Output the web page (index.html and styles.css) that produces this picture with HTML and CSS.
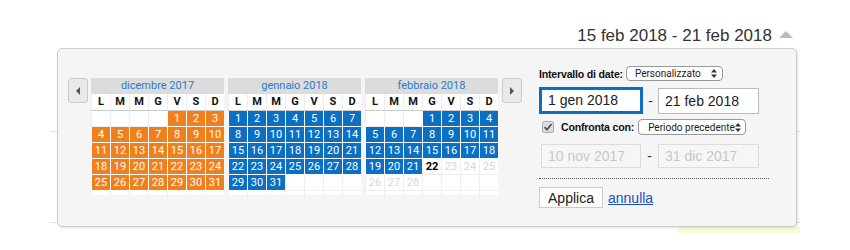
FILE: index.html
```html
<!DOCTYPE html>
<html lang="it">
<head>
  <meta charset="UTF-8" />
  <title>Intervallo di date</title>
  <link rel="stylesheet" href="styles.css">
</head>
<body>

  <div class="range-head">
    <span class="range-text">15 feb 2018 - 21 feb 2018</span>
    <span class="caret"></span>
  </div>

  <div class="page">
    <div class="page-line first"></div>
    <div class="page-line second"></div>
    <div class="page-note"></div>

    <div class="picker">
      <div class="cal">
        <div class="nav prev"><span class="tri-left"></span></div>
        <div class="month" id="m0"></div>
        <div class="month" id="m1"></div>
        <div class="month" id="m2"></div>
        <div class="nav next"><span class="tri-right"></span></div>
      </div>

      <div class="controls">
        <div class="row">
          <span class="lbl">Intervallo di date:</span>
          <div class="select sel-range"><span>Personalizzato</span>
            <svg class="arrows" width="6" height="9" viewBox="0 0 6 9"><path d="M3 0L6 3.5H0Z M3 9L6 5.5H0Z" fill="#333"/></svg>
          </div>
        </div>
        <div class="row dates">
          <div class="field focus">1 gen 2018</div>
          <span class="dash">-</span>
          <div class="field">21 feb 2018</div>
        </div>
        <div class="row compare">
          <svg class="check" width="12" height="12" viewBox="0 0 12 12"><rect x="0.5" y="0.5" width="11" height="11" rx="2" fill="#ddd" stroke="#aaa"/><path d="M2.5 6.2L5 8.6L9.6 3" fill="none" stroke="#555" stroke-width="1.8"/></svg>
          <span class="lbl">Confronta con:</span>
          <div class="select sel-compare"><span>Periodo precedente</span>
            <svg class="arrows" width="6" height="9" viewBox="0 0 6 9"><path d="M3 0L6 3.5H0Z M3 9L6 5.5H0Z" fill="#333"/></svg>
          </div>
        </div>
        <div class="row dates off">
          <div class="field disabled first">10 nov 2017</div>
          <span class="dash">-</span>
          <div class="field disabled">31 dic 2017</div>
        </div>
        <div class="dots"></div>
        <div class="row actions">
          <button class="apply">Applica</button>
          <a href="#" class="cancel">annulla</a>
        </div>
      </div>
    </div>
  </div>

  <script>
    var months = [
      { title: "dicembre 2017", lead: 4, len: 31, cls: "a", upTo: 31 },
      { title: "gennaio 2018", lead: 0, len: 31, cls: "b", upTo: 31 },
      { title: "febbraio 2018", lead: 3, len: 28, cls: "b", upTo: 21, today: 22 }
    ];
    var dow = ["L", "M", "M", "G", "V", "S", "D"];

    months.forEach(function (m, i) {
      var html = '<div class="month-title">' + m.title + '</div><div class="dow">';
      dow.forEach(function (d) { html += '<span>' + d + '</span>'; });
      html += '</div><div class="days">';
      for (var c = 0; c < 42; c++) {
        var n = c - m.lead + 1;
        if (n < 1 || n > m.len) {
          html += '<span class="day"></span>';
        } else if (n <= m.upTo) {
          html += '<span class="day sel-' + m.cls + '">' + n + '</span>';
        } else if (n === m.today) {
          html += '<span class="day today">' + n + '</span>';
        } else {
          html += '<span class="day later">' + n + '</span>';
        }
      }
      html += '</div>';
      document.getElementById("m" + i).innerHTML = html;
    });
  </script>
</body>
</html>
```

FILE: styles.css
```css
* {
  box-sizing: border-box;
}
body {
  margin: 0;
  background: #fff;
  font-family: Roboto, "Liberation Sans", Arial, sans-serif;
}

/* top label */
.range-head {
  display: flex;
  justify-content: flex-end;
  align-items: center;
  height: 48px;
  padding: 26px 57px 2px 0;
}
.range-text {
  font-family: "Liberation Sans", Arial, sans-serif;
  font-size: 17px;
  line-height: 20px;
  color: #333;
}
.caret {
  width: 0;
  height: 0;
  margin: -3px 0 0 7px;
  border-left: 7px solid transparent;
  border-right: 7px solid transparent;
  border-bottom: 7px solid #bbb;
}

/* page behind the dropdown */
.page {
  position: relative;
  margin-left: 50px;
  width: 750px;
  height: 202px;
}
.page-line {
  border-top: 1px solid #e2e2e2;
}
.page-line.first {
  padding-top: 83px;
  border-top: none;
  border-bottom: 1px solid #e2e2e2;
}
.page-line.second {
  margin-top: 90px;
}
.page-note {
  margin: 4px 0 0 627px;
  width: 123px;
  height: 6px;
  background: #fafad4;
}

/* dropdown */
.picker {
  position: absolute;
  top: 0;
  left: 7px;
  width: 740px;
  height: 179px;
  display: flex;
  align-items: flex-start;
  padding-left: 10px;
  background: #f5f5f5;
  border: 1px solid #ccc;
  border-radius: 5px;
  box-shadow: 1px 1px 2px rgba(0,0,0,0.12);
}
.cal {
  display: flex;
  align-items: flex-start;
  margin-top: 29px;
}
.nav {
  width: 20px;
  height: 25px;
  display: flex;
  align-items: center;
  justify-content: center;
  background: #e9e9e9;
  border: 1px solid #ccc;
  border-radius: 3px;
}
.nav.prev {
  margin-right: 3px;
}
.nav.next {
  margin-left: 4px;
}
.tri-left {
  border-top: 4px solid transparent;
  border-bottom: 4px solid transparent;
  border-right: 4px solid #555;
}
.tri-right {
  border-top: 4px solid transparent;
  border-bottom: 4px solid transparent;
  border-left: 4px solid #555;
}
.month {
  width: 133px;
  height: 117px;
  overflow: hidden;
  background: #fff;
}
.month + .month {
  margin-left: 4px;
}
.month-title {
  height: 16px;
  background: #dcdcdc;
  color: #2a7bcf;
  font-size: 11px;
  line-height: 16px;
  text-align: center;
}
.dow {
  display: grid;
  grid-template-columns: repeat(7, 19px);
  height: 17px;
  border-bottom: 1px solid #ccc;
}
.dow span {
  border-left: 1px solid #eee;
  font-size: 11px;
  font-weight: bold;
  line-height: 16px;
  text-align: center;
  color: #111;
}
.days {
  display: grid;
  grid-template-columns: repeat(7, 19px);
  grid-auto-rows: 16px;
}
.day {
  border-left: 1px solid #eee;
  border-bottom: 1px solid #eee;
  font-size: 11px;
  line-height: 15px;
  text-align: center;
  color: #fff;
}
.day.sel-a {
  background: #f0801c;
  border-color: #fff;
}
.day.sel-b {
  background: #0b6fc4;
  border-color: #fff;
}
.day.today {
  color: #000;
  font-weight: bold;
}
.day.later {
  color: #d6d6d6;
}

/* right side */
.controls {
  width: 232px;
  margin: 17px 0 0 17px;
  font-family: "Liberation Sans", Arial, sans-serif;
}
.row {
  display: flex;
  align-items: center;
}
.lbl {
  font-size: 10.6px;
  font-weight: bold;
  letter-spacing: -0.2px;
  color: #111;
  white-space: nowrap;
}
.select {
  display: flex;
  align-items: center;
  justify-content: space-between;
  height: 15px;
  padding: 0 5px 0 8px;
  background: #fff;
  border: 1px solid #999;
  border-radius: 4px;
  font-family: Roboto, "Liberation Sans", Arial, sans-serif;
  font-size: 10px;
  color: #222;
  white-space: nowrap;
  overflow: hidden;
}
.arrows {
  flex-shrink: 0;
}
.sel-range {
  width: 97px;
  margin-left: 3px;
}
.sel-compare {
  width: 108px;
  height: 16px;
  margin-left: 4px;
  padding-left: 9px;
}
.dates {
  margin-top: 6px;
}
.field {
  width: 101px;
  height: 26px;
  padding-left: 6px;
  background: #fff;
  border: 1px solid #bbb;
  font-size: 14px;
  line-height: 24px;
  color: #222;
}
.field.focus {
  width: 104px;
  height: 27px;
  padding-left: 6px;
  border: 3px solid #0a6ec2;
  line-height: 21px;
}
.dash {
  width: 15px;
  font-size: 14px;
  text-align: center;
  color: #333;
}
.compare {
  margin-top: 5px;
}
.check {
  margin: 0 7px 0 3px;
}
.off {
  margin-top: 9px;
}
.field.disabled {
  height: 24px;
  background: #f6f6f6;
  border-color: #ddd;
  color: #c8c8c8;
  line-height: 22px;
}
.field.disabled.first {
  width: 100px;
  margin-left: 2px;
}
.off .dash {
  width: 17px;
}
.dots {
  margin-top: 10px;
  width: 230px;
  border-top: 1px dotted #555;
}
.actions {
  margin-top: 8px;
}
.apply {
  width: 64px;
  height: 21px;
  padding: 0;
  background: #fff;
  border: 1px solid #ccc;
  font-family: "Liberation Sans", Arial, sans-serif;
  font-size: 14px;
  color: #222;
}
.cancel {
  margin-left: 5px;
  font-size: 14px;
  color: #1a4fc0;
}
```
